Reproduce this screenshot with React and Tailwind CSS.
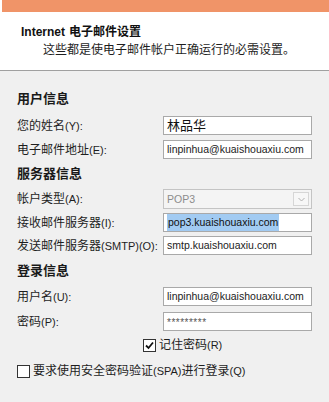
import React from "react";

const cjk = "font-['Liberation_Sans','Noto_Sans_CJK_SC',sans-serif]";
const latin = "font-['Liberation_Sans','Noto_Sans_CJK_SC',sans-serif]";

const Heading = ({ children, className = "" }) => (
  <div className={`h-[20px] flex items-center text-[13px] font-bold text-[#1a1a1a] leading-none ${className}`}>
    {children}
  </div>
);

const Field = ({ label, hint, children, className = "" }) => (
  <div className={`flex items-center ${className}`}>
    <div className="flex-1 text-[12px] text-[#1e1e1e] leading-none whitespace-nowrap">
      {label}
      <span className="text-[11px]">{hint}</span>
    </div>
    {children}
  </div>
);

const TextBox = ({ children, className = "" }) => (
  <div
    className={`w-[149px] h-[19px] bg-white border border-[#a9a9a9] flex items-center pl-[3px] overflow-hidden whitespace-nowrap ${className}`}
  >
    {children}
  </div>
);

const CheckBox = ({ checked }) => (
  <span className="w-[13px] h-[13px] border border-[#333] bg-white flex items-center justify-center shrink-0">
    {checked ? (
      <svg width="11" height="11" viewBox="0 0 11 11">
        <path d="M2 5.5 L4.5 8 L9 2.5" fill="none" stroke="#111" strokeWidth="1.8" />
      </svg>
    ) : null}
  </span>
);

export default function App() {
  return (
    <div className={`w-[329px] h-[402px] bg-[#f0f0f0] overflow-hidden flex flex-col ${cjk}`}>
      <div className="bg-white pl-[2px]">
        <div className="h-[12px] bg-[#f09468]" />
      </div>

      <div className="h-[59px] bg-white border-b border-[#a0a0a0] flex flex-col">
        <div className="pl-[21px] mt-[13px] h-[14px] flex items-center text-[12px] font-bold text-[#111] leading-none whitespace-nowrap">
          <span className={`${latin} font-bold mr-[4px]`}>Internet</span>
          电子邮件设置
        </div>
        <div className="pl-[43px] mt-[3px] h-[16px] flex items-center text-[12px] text-[#1e1e1e] leading-none whitespace-nowrap">
          这些都是使电子邮件帐户正确运行的必需设置。
        </div>
      </div>

      <div className="flex flex-col px-[17px]">
        <Heading className="mt-[17px]">用户信息</Heading>

        <Field label="您的姓名" hint="(Y):" className="mt-[8px]">
          <TextBox>
            <span className="text-[13px] text-[#111] leading-none">林品华</span>
          </TextBox>
        </Field>

        <Field label="电子邮件地址" hint="(E):" className="mt-[5px]">
          <TextBox>
            <span className={`${latin} text-[10.5px] text-[#222] leading-none`}>linpinhua@kuaishouaxiu.com</span>
          </TextBox>
        </Field>

        <Heading className="mt-[4px]">服务器信息</Heading>

        <Field label="帐户类型" hint="(A):" className="mt-[6px]">
          <div className="w-[149px] h-[20px] bg-[#f4f4f4] border border-[#c4c4c4] flex items-center justify-between pl-[3px] pr-[2px]">
            <span className={`${latin} text-[10.5px] text-[#8c8c8c] leading-none`}>POP3</span>
            <span className="w-[16px] h-[14px] border border-[#d6d6d6] bg-[#f7f7f7] flex items-center justify-center">
              <svg width="7" height="5" viewBox="0 0 7 5">
                <path d="M0.5 1 L3.5 4 L6.5 1" fill="none" stroke="#b0b0b0" strokeWidth="1" />
              </svg>
            </span>
          </div>
        </Field>

        <Field label="接收邮件服务器" hint="(I):" className="mt-[4px]">
          <TextBox className="pl-[2px]">
            <span className={`${latin} text-[10.5px] text-[#111] leading-none bg-[#a2cbf2] py-[3px] px-[1px]`}>
              pop3.kuaishouaxiu.com
            </span>
          </TextBox>
        </Field>

        <Field label="发送邮件服务器" hint="(SMTP)(O):" className="mt-[4px]">
          <TextBox>
            <span className={`${latin} text-[10.5px] text-[#222] leading-none`}>smtp.kuaishouaxiu.com</span>
          </TextBox>
        </Field>

        <Heading className="mt-[5px]">登录信息</Heading>

        <Field label="用户名" hint="(U):" className="mt-[7px]">
          <TextBox>
            <span className={`${latin} text-[10.5px] text-[#222] leading-none`}>linpinhua@kuaishouaxiu.com</span>
          </TextBox>
        </Field>

        <Field label="密码" hint="(P):" className="mt-[6px]">
          <TextBox>
            <span className={`${latin} text-[10px] text-[#555] leading-none pt-[3px] tracking-[0.5px]`}>*********</span>
          </TextBox>
        </Field>

        <div className="mt-[6px] h-[16px] flex items-center pl-[126px] gap-[3px]">
          <CheckBox checked />
          <span className="text-[12px] text-[#1e1e1e] leading-none whitespace-nowrap">
            记住密码<span className="text-[11px]">(R)</span>
          </span>
        </div>

        <div className="mt-[10px] h-[16px] flex items-center gap-[3px]">
          <CheckBox />
          <span className="text-[12px] text-[#1e1e1e] leading-none whitespace-nowrap">
            要求使用安全密码验证<span className="text-[11px]">(SPA)</span>进行登录<span className="text-[11px]">(Q)</span>
          </span>
        </div>
      </div>
    </div>
  );
}
